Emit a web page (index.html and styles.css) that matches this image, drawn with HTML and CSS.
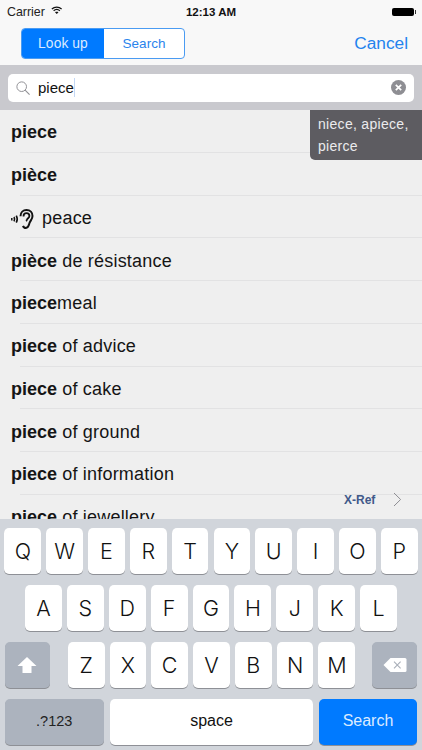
FILE: index.html
```html
<!DOCTYPE html>
<html lang="en">
<head>
<meta charset="utf-8">
<title>Look up</title>
<link rel="stylesheet" href="styles.css">
</head>
<body>
<div class="app">
  <header class="top">
    <div class="status">
      <div class="status-left">
        <span>Carrier</span>
        <svg class="wifi" viewBox="0 0 14 10" width="11.500" height="8.200"><path d="M1 3.600C4.400.5 9.600.5 13 3.600" fill="none" stroke="#111" stroke-width="1.500"/><path d="M3.200 5.700c2.200-1.900 5.400-1.900 7.600 0" fill="none" stroke="#111" stroke-width="1.500"/><path d="M7 9.800 4.900 7.600c1.200-.8 3-.8 4.200 0z" fill="#111"/></svg>
      </div>
      <div class="status-time">12:13 AM</div>
      <div class="status-right">
        <span class="battery"></span><span class="battery-tip"></span>
      </div>
    </div>
    <div class="nav">
      <div class="segment">
        <div class="seg seg-on">Look up</div>
        <div class="seg">Search</div>
      </div>
      <div class="cancel">Cancel</div>
    </div>
  </header>
  <div class="searchbar">
    <div class="field">
      <svg class="glass" viewBox="0 0 16 16" width="14" height="14"><circle cx="6.500" cy="6.500" r="5.500" fill="none" stroke="#8e8e93" stroke-width="1.100"/><path d="M10.400 10.400 15.500 15.500" stroke="#8e8e93" stroke-width="1.200" fill="none"/></svg>
      <span class="query">piece</span><span class="caret"></span>
      <svg class="clear" viewBox="0 0 15 15" width="15" height="15"><circle cx="7.500" cy="7.500" r="7.500" fill="#8e8e93"/><path d="M4.800 4.800l5.400 5.400M10.200 4.800l-5.400 5.400" stroke="#fff" stroke-width="1.700" fill="none"/></svg>
    </div>
  </div>
  <main class="list">
    <div class="row"><b>piece</b></div>
    <div class="row"><b>pièce</b></div>
    <div class="row">
      <svg class="ear" viewBox="0 0 24 20" width="24" height="20">
        <path d="M.8 9v2.400" stroke="#111" stroke-width="1.500" fill="none"/>
        <path d="M3 8c.7 1.300.7 3.100 0 4.400" stroke="#111" stroke-width="1.600" fill="none"/>
        <path d="M5.300 6.700c1.200 2.200 1.200 4.800 0 7" stroke="#111" stroke-width="1.600" fill="none"/>
        <path d="M9.500 7.200C9.500 3.300 12.200 1 15.500 1c3.700 0 6 2.600 6 6 0 3.300-2.300 4.700-3 7-.7 2.300-.9 5-3.600 5-1.500 0-2.500-.8-2.900-2.100" stroke="#111" stroke-width="2" fill="none"/>
        <path d="M12.500 7.500c0-1.900 1.300-3.300 3-3.300 1.700 0 2.900 1.200 2.900 2.800 0 1.800-1.900 2.200-2.500 3.600-.3.600-.3 1.100-.9 1.400" stroke="#111" stroke-width="1.800" fill="none"/>
      </svg>
      <span class="plain">peace</span>
    </div>
    <div class="row"><span class="plain"><b>pièce</b> de résistance</span></div>
    <div class="row"><span class="plain"><b>piece</b>meal</span></div>
    <div class="row"><span class="plain"><b>piece</b> of advice</span></div>
    <div class="row"><span class="plain"><b>piece</b> of cake</span></div>
    <div class="row"><span class="plain"><b>piece</b> of ground</span></div>
    <div class="row"><span class="plain"><b>piece</b> of information</span></div>
    <div class="row"><span class="plain"><b>piece</b> of jewellery</span></div>
    <div class="hint">niece, apiece,<br>pierce</div>
    <div class="xref">
      <span>X-Ref</span>
      <svg viewBox="0 0 9 15" width="9" height="15"><path d="M1 1l6.600 6.500L1 14" fill="none" stroke="#8e8e93" stroke-width="1"/></svg>
    </div>
  </main>
  <section class="keyboard">
    <div class="krow">
      <div class="key">Q</div><div class="key">W</div><div class="key">E</div><div class="key">R</div><div class="key">T</div><div class="key">Y</div><div class="key">U</div><div class="key">I</div><div class="key">O</div><div class="key">P</div>
    </div>
    <div class="krow">
      <div class="key">A</div><div class="key">S</div><div class="key">D</div><div class="key">F</div><div class="key">G</div><div class="key">H</div><div class="key">J</div><div class="key">K</div><div class="key">L</div>
    </div>
    <div class="krow krow-split">
      <div class="key key-fn">
        <svg viewBox="0 0 20 18" width="20" height="18"><path d="M10 1 19.500 10H14.500V17H5.500V10H.5z" fill="#fff"/></svg>
      </div>
      <div class="letters">
        <div class="key">Z</div><div class="key">X</div><div class="key">C</div><div class="key">V</div><div class="key">B</div><div class="key">N</div><div class="key">M</div>
      </div>
      <div class="key key-fn">
        <svg viewBox="0 0 24 16" width="24" height="16"><path d="M7.500 1H22a1.500 1.500 0 0 1 1.500 1.500v11A1.500 1.500 0 0 1 22 15H7.500L.5 8z" fill="#fff"/><path d="M11 4.700l6.600 6.600M17.600 4.700 11 11.300" stroke="#a9afb9" stroke-width="1.100" fill="none"/></svg>
      </div>
    </div>
    <div class="krow krow-bottom">
      <div class="key key-fn key-num">.?123</div>
      <div class="key key-space">space</div>
      <div class="key key-go">Search</div>
    </div>
  </section>
</div>
</body>
</html>
```
FILE: styles.css
```css
* { box-sizing: border-box; }
html, body { margin: 0; padding: 0; }
body { font-family: "Liberation Sans", Arial, sans-serif; color: #111; }
.app { width: 422px; height: 750px; display: flex; flex-direction: column; overflow: hidden; background: #efefef; }

.top { height: 65px; background: #f8f8f8; flex: none; }
.status { height: 22px; display: flex; align-items: center; justify-content: space-between; padding: 1px 6px 0 7px; font-size: 12.400px; position: relative; }
.status-left { display: flex; align-items: center; gap: 6px; color: #222; }
.wifi { margin-top: -3px; }
.status-time { position: absolute; left: 0; right: 0; text-align: center; font-weight: bold; font-size: 11.500px; pointer-events: none; }
.status-right { display: flex; align-items: center; }
.battery { width: 22px; height: 8px; background: #000; border-radius: 2px; display: block; }
.battery-tip { width: 1.500px; height: 4px; background: #333; margin-left: 1px; display: block; }

.nav { height: 43px; display: flex; align-items: center; justify-content: space-between; padding: 0 14px 0 21px; }
.segment { width: 164px; height: 31px; display: flex; border: 1px solid #4a9bf2; border-radius: 4px; overflow: hidden; background: #fff; margin-top: -1px; }
.seg { flex: 1; display: flex; align-items: center; justify-content: center; font-size: 13.500px; color: #2a84ec; }
.seg-on { flex: none; width: 82px; background: #007aff; color: #dcebff; font-size: 13.800px; letter-spacing: .1px; }
.cancel { font-size: 17.300px; color: #2483ee; }

.searchbar { height: 45px; background: #c9c9ce; padding: 8.500px 8px 8px; flex: none; }
.field { height: 28.500px; background: #fff; border-radius: 5px; display: flex; align-items: center; padding: 0 8px 0 8px; font-size: 15px; }
.glass { margin-right: 8px; flex: none; }
.query { color: #111; }
.caret { width: 1px; height: 19px; background: #c4d8f5; }
.clear { margin-left: auto; flex: none; }

.list { flex: 1; min-height: 0; overflow: hidden; position: relative; background: #efefef; }
.row { height: 42.750px; flex: none; display: flex; align-items: center; gap: 7px; padding: 3px 0 0 11px; font-size: 18px; position: relative; color: #151515; }
.row::after { content: ""; position: absolute; left: 20px; right: 0; bottom: 0; height: 1px; background: #e2e2e3; }
.plain { letter-spacing: .2px; }
.plain b { letter-spacing: 0; }
.ear { margin-top: 1px; }

.hint { position: absolute; top: 0; right: 0; width: 112px; height: 49.500px; padding: 3px 0 0 8px; background: #5d5c61; color: #ebebed; font-size: 14px; line-height: 22px; letter-spacing: .3px; border-bottom-left-radius: 5px; }
.xref { position: absolute; top: 382px; left: 344px; display: flex; align-items: center; gap: 18px; font-size: 12px; font-weight: bold; color: #41598a; }

.keyboard { height: 231px; flex: none; background: #d1d5db; padding: 9px 4.500px 0; display: flex; flex-direction: column; gap: 11px; }
.krow { height: 46px; display: flex; justify-content: center; gap: 5.100px; }
.krow-split { justify-content: space-between; }
.letters { display: flex; gap: 5px; margin-left: 1px; }
.key { width: 36.800px; height: 46px; background: #fff; border-radius: 5px; box-shadow: 0 1px 0 #8e9096; display: flex; align-items: center; justify-content: center; padding-bottom: 1px; font-family: Inter, "Liberation Sans", sans-serif; font-weight: 300; font-size: 21.500px; color: #111; }
.key-fn { width: 45.500px; background: #acb3be; }
.krow-bottom { justify-content: flex-start; gap: 6px; }
.key-num { width: 99.500px; font-family: "Liberation Sans", sans-serif; font-weight: 400; font-size: 14.500px; color: #222; padding-bottom: 2px; }
.key-space { width: 203px; font-family: "Liberation Sans", sans-serif; font-weight: 400; font-size: 16px; padding-bottom: 2px; }
.key-go { width: 98px; background: #007aff; color: #dcebff; font-family: "Liberation Sans", sans-serif; font-weight: 400; font-size: 16px; padding-bottom: 2px; }
```
